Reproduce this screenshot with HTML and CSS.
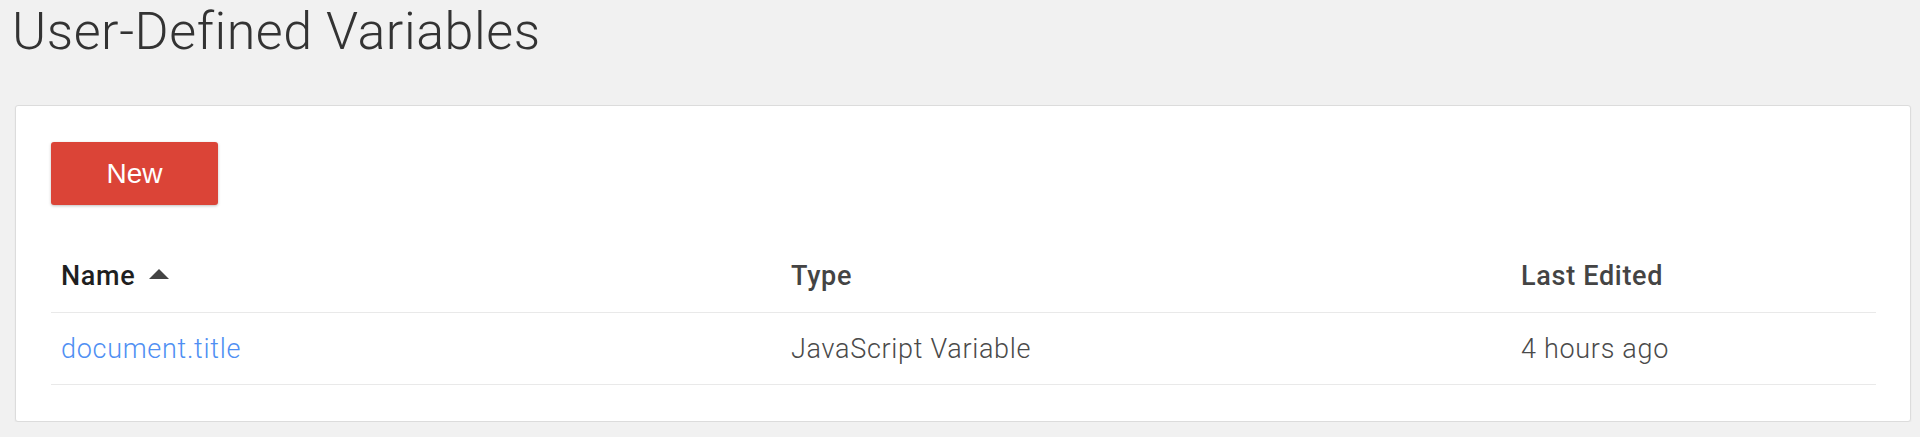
FILE: index.html
```html
<!DOCTYPE html>
<html>
<head>
<meta charset="utf-8">
<link rel="stylesheet" href="styles.css">
</head>
<body>
<h1 class="page-title">User-Defined Variables</h1>
<div class="card">
  <button class="btn-new">New</button>
  <table class="var-table">
    <colgroup>
      <col class="col-name">
      <col class="col-type">
      <col class="col-edited">
    </colgroup>
    <thead>
      <tr>
        <th class="th-name">Name<span class="sort-up"></span></th>
        <th>Type</th>
        <th>Last Edited</th>
      </tr>
    </thead>
    <tbody>
      <tr>
        <td><a class="var-link" href="#">document.title</a></td>
        <td>JavaScript Variable</td>
        <td>4 hours ago</td>
      </tr>
    </tbody>
  </table>
</div>
</body>
</html>
```

FILE: styles.css
```css
html, body {
  margin: 0;
  padding: 0;
  background: #f1f1f1;
  font-family: Roboto, "Liberation Sans", Arial, sans-serif;
}

.page-title {
  margin: 0;
  padding: 2px 0 0 12px;
  height: 60px;
  font-size: 52px;
  line-height: 60px;
  font-weight: 300;
  letter-spacing: 0.55px;
  color: #333333;
}

.card {
  margin: 43px 9px 0 15px;
  background: #ffffff;
  border: 1px solid #dcdcdc;
  border-radius: 3px;
  box-shadow: 0 1px 2px rgba(0, 0, 0, 0.06);
  padding: 36px 34px 36px 35px;
}

.btn-new {
  display: block;
  width: 167px;
  height: 63px;
  padding: 0;
  border: none;
  border-radius: 3px;
  background: #db4437;
  color: #ffffff;
  font-family: "Liberation Sans", Arial, sans-serif;
  font-size: 28px;
  box-shadow: 0 1px 3px rgba(0, 0, 0, 0.25);
}

.var-table {
  width: 100%;
  margin-top: 35px;
  border-collapse: collapse;
  table-layout: fixed;
}

.col-name { width: 40%; }
.col-type { width: 40%; }
.col-edited { width: 20%; }

.var-table th {
  height: 72px;
  padding: 0 10px;
  text-align: left;
  font-size: 27px;
  line-height: 72px;
  font-weight: 500;
  letter-spacing: 0.7px;
  color: #444444;
  border-bottom: 1px solid #e9e9e9;
  white-space: nowrap;
}

.var-table th.th-name {
  color: #1f1f1f;
}

.sort-up {
  display: inline-block;
  width: 0;
  height: 0;
  margin-left: 13px;
  border-left: 10.5px solid transparent;
  border-right: 10.5px solid transparent;
  border-bottom: 10px solid #444444;
  vertical-align: 6px;
}

.var-table td {
  height: 71px;
  padding: 0 10px;
  font-size: 27px;
  font-weight: 300;
  letter-spacing: 0.7px;
  color: #4a4a4a;
  border-bottom: 1px solid #e9e9e9;
  white-space: nowrap;
}

.var-link {
  color: #4f8ff3;
  text-decoration: none;
}
```
